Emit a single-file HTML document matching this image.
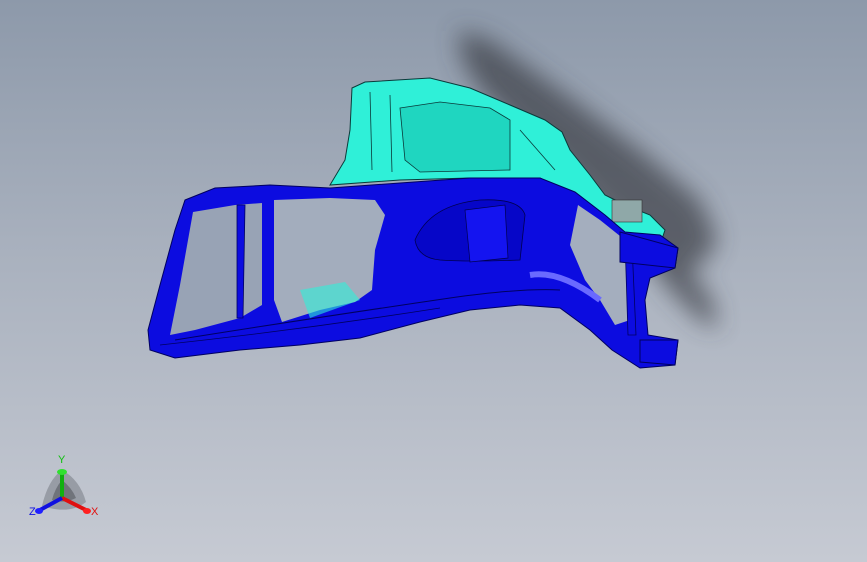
<!DOCTYPE html>
<html><head><style>
html,body{margin:0;padding:0;width:867px;height:562px;overflow:hidden}
body{background:linear-gradient(180deg,#8d99aa 0%,#a9b1be 45%,#c6cad3 100%);font-family:"Liberation Sans",sans-serif}
</style></head><body>
<svg width="867" height="562" viewBox="0 0 867 562" style="position:absolute;left:0;top:0">
<defs>
<filter id="b" x="-20%" y="-20%" width="140%" height="140%"><feGaussianBlur stdDeviation="12"/></filter>
</defs>
<!-- shadow -->
<g filter="url(#b)" fill="#3a3d44" opacity="0.7">
<path d="M458 30 L490 40 L560 90 L640 150 L700 200 L718 240 L705 260 L690 270 L712 300 L718 330 L700 320 L670 290 L640 250 L590 200 L530 140 L480 90 L462 60 Z"/>
</g>
<!-- cyan part -->
<path d="M352 88 L365 82 L430 78 L470 88 L510 105 L545 120 L562 132 L570 150 L590 175 L605 195 L625 205 L650 215 L665 230 L660 245 L620 240 L580 200 L540 178 L470 178 L400 180 L330 185 L345 160 L350 130 Z" fill="#2ff0d8" stroke="#0a3a3a" stroke-width="1"/>
<path d="M400 108 L440 102 L490 108 L510 120 L510 170 L420 172 L405 160 Z" fill="#1fd6c0" stroke="#0a3a3a" stroke-width="0.8"/>
<path d="M370 92 L372 170 M390 95 L392 172 M520 130 L555 170" stroke="#0a3a3a" stroke-width="0.8" fill="none"/>
<rect x="612" y="200" width="30" height="22" fill="#8fa8a8" stroke="#333" stroke-width="0.6"/>
<!-- blue main part -->
<path d="M185 200 L215 188 L270 185 L330 188 L400 183 L470 178 L540 178 L575 192 L605 215 L625 232 L660 235 L678 248 L675 268 L650 278 L645 300 L648 335 L678 340 L675 365 L640 368 L612 350 L590 330 L560 308 L520 305 L470 310 L420 322 L360 338 L300 345 L240 350 L175 358 L150 350 L148 330 L160 285 L175 230 Z" fill="#0c0ce0" stroke="#000060" stroke-width="1"/>
<!-- left opening -->
<path d="M193 212 L235 205 L262 203 L262 305 L240 318 L195 330 L170 335 L180 285 Z" fill="#98a3b5"/>
<path d="M237 205 L245 205 L243 318 L237 318 Z" fill="#0c0ce0" stroke="#000060" stroke-width="0.8"/>
<!-- middle opening -->
<path d="M274 200 L330 198 L375 200 L385 215 L375 250 L372 290 L355 302 L320 310 L282 322 L274 300 Z" fill="#a3adbd"/>
<path d="M300 290 L345 282 L360 300 L310 318 Z" fill="#2ff0d8" opacity="0.6"/>
<!-- right opening -->
<path d="M578 205 L600 220 L625 240 L632 270 L630 320 L615 325 L600 300 L585 280 L570 245 Z" fill="#a4aebe"/>
<path d="M625 240 L632 245 L636 335 L628 335 Z" fill="#0c0ce0" stroke="#000060" stroke-width="0.8"/>
<!-- details -->
<path d="M415 240 Q430 205 480 200 Q520 198 525 215 L520 260 Q470 262 440 260 Q418 258 415 240Z" fill="#0606c8" stroke="#000050" stroke-width="0.8"/>
<path d="M465 210 L505 205 L508 258 L470 262 Z" fill="#1414f0" stroke="#000050" stroke-width="0.7"/>
<path d="M530 275 Q560 270 600 300" stroke="#6a6aff" stroke-width="6" fill="none"/>
<path d="M175 340 Q300 320 450 298 Q520 288 560 290" stroke="#000060" stroke-width="1" fill="none"/>
<path d="M160 345 Q300 330 440 308" stroke="#000060" stroke-width="0.8" fill="none"/>
<path d="M620 232 L678 248 L675 268 L620 262 Z" fill="#0c0ce0" stroke="#000060"/>
<path d="M640 340 L678 340 L675 365 L640 362 Z" fill="#0c0ce0" stroke="#000060"/>
</svg>
<!-- axis triad -->
<svg width="90" height="85" viewBox="0 0 90 85" style="position:absolute;left:20px;top:440px">
<path d="M42 30 Q60 40 66 62 Q50 75 22 66 Q28 40 42 30Z" fill="#7d828b" opacity="0.6"/>
<path d="M42 40 Q52 48 56 58 Q44 64 32 60 Q35 48 42 40Z" fill="#55595f" opacity="0.6"/>
<line x1="42" y1="58" x2="42" y2="34" stroke="#10b010" stroke-width="4"/>
<ellipse cx="42" cy="32" rx="5" ry="3" fill="#30e030"/>
<line x1="42" y1="58" x2="66" y2="70" stroke="#e01010" stroke-width="4"/>
<ellipse cx="67" cy="71" rx="4" ry="3" fill="#ff2020"/>
<line x1="42" y1="58" x2="20" y2="70" stroke="#1010e0" stroke-width="4"/>
<ellipse cx="19" cy="71" rx="4" ry="3" fill="#2020ff"/>
<text x="38" y="23" font-size="11" fill="#10c010">Y</text>
<text x="71" y="75" font-size="11" fill="#e01010">X</text>
<text x="9" y="75" font-size="11" fill="#1010e0">Z</text>
</svg>
</body></html>
